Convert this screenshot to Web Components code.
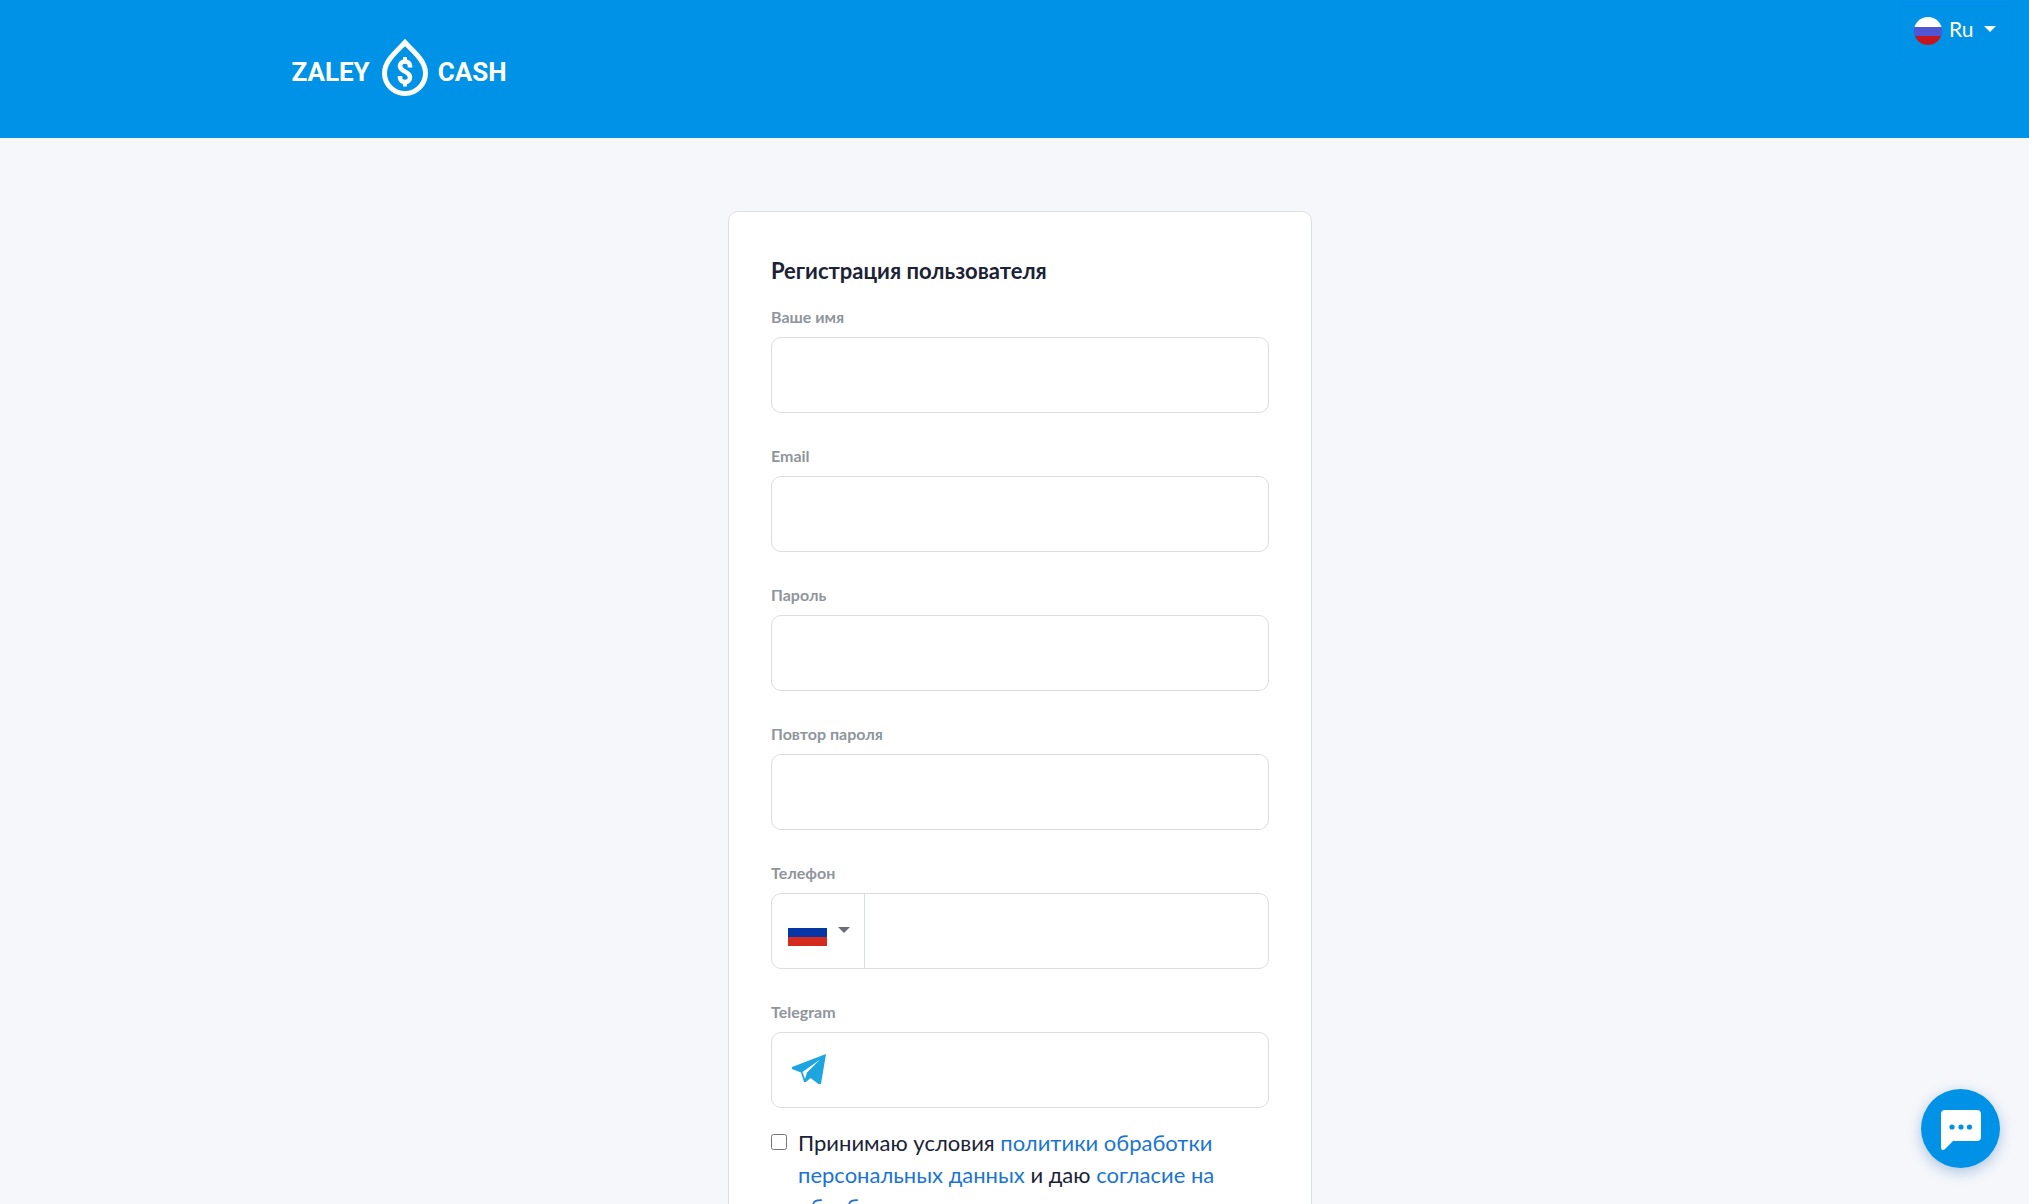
<!DOCTYPE html>
<html lang="ru">
<head>
<meta charset="UTF-8">
<meta name="viewport" content="width=device-width, initial-scale=1.0">
<title>Zaley Cash</title>
<style>
    html {
        scrollbar-width: none;
    }

    body {
        margin: 0;
        min-height: 100vh;
        background: #f5f7fb;
        color: #1b2236;
        font-family: Lato, "Noto Sans", sans-serif;
        font-size: 20px;
    }
</style>
</head>
<body>
<site-header></site-header>
<register-card heading="Регистрация пользователя">
    <form-field label="Ваше имя" name="name"></form-field>
    <form-field label="Email" name="email" type="email"></form-field>
    <form-field label="Пароль" name="password" type="password"></form-field>
    <form-field label="Повтор пароля" name="password2" type="password"></form-field>
    <form-field label="Телефон" name="phone" type="tel">
        <country-picker slot="before"></country-picker>
    </form-field>
    <form-field label="Telegram" name="telegram">
        <telegram-icon slot="before"></telegram-icon>
    </form-field>
    <agree-check>Принимаю условия <a href="#policy">политики обработки персональных данных</a> и даю <a href="#consent">согласие на обработку персональных данных</a></agree-check>
</register-card>
<chat-button></chat-button>

<script>
// Logo Component
class SiteLogo extends HTMLElement {
    constructor() {
        super();
        this.attachShadow({ mode: 'open' });
    }

    connectedCallback() {
        this.shadowRoot.innerHTML = `
            <style>
                :host {
                    display: block;
                }

                a {
                    display: flex;
                    align-items: center;
                    gap: 10px;
                    color: white;
                    font: bold 26px/52px Roboto, sans-serif;
                    text-decoration: none;
                }

                span {
                    padding-top: 8px;
                }

                svg {
                    display: block;
                }
            </style>

            <a href="#home">
                <span>ZALEY</span>
                <svg width="48" height="60" viewBox="-1 0 48 60" fill="none" stroke="white" aria-hidden="true">
                    <path d="M24 4.500C18 11.500 3.500 22 3.500 35a20.500 20.500 0 0 0 41 0C44.500 22 30 11.500 24 4.500Z" stroke-width="5"/>
                    <path d="M29 29.500v-1.500a5 4.500 0 0 0-10 0c0 6.500 10 4.500 10 11.500a5 4.500 0 0 1-10 0v-1.500" stroke-width="4.600"/>
                    <path d="M24 19v5M24 43.500v5" stroke-width="4"/>
                </svg>
                <span>CASH</span>
            </a>
        `;
    }
}

// Language Select Component
class LangSelect extends HTMLElement {
    constructor() {
        super();
        this.attachShadow({ mode: 'open' });
    }

    connectedCallback() {
        this.shadowRoot.innerHTML = `
            <style>
                :host {
                    display: block;
                }

                label {
                    display: flex;
                    align-items: center;
                    gap: 7px;
                    height: 50px;
                    padding: 0 15px 0 14px;
                    border: 1px solid #008ded;
                    border-radius: 4px;
                }

                .flag {
                    display: block;
                    border-radius: 50%;
                }

                .box {
                    display: flex;
                    align-items: center;
                    gap: 10px;
                    padding-bottom: 5px;
                }

                select {
                    appearance: none;
                    border: 0;
                    padding: 0;
                    background: none;
                    color: white;
                    font: 21px/28px Lato, "Noto Sans", sans-serif;
                    cursor: pointer;
                }

                option {
                    color: #1b2236;
                }
            </style>

            <label>
                <svg class="flag" width="28" height="28" viewBox="0 0 28 28" aria-hidden="true">
                    <path fill="#fff" d="M0 0h28v10H0z"/>
                    <path fill="#4f55d3" d="M0 10h28v9H0z"/>
                    <path fill="#c5161d" d="M0 19h28v9H0z"/>
                </svg>
                <span class="box">
                    <select aria-label="Язык"><option>Ru</option></select>
                    <svg width="12" height="6" viewBox="0 0 12 6" fill="#fff" aria-hidden="true"><path d="M0 0h12L6 6z"/></svg>
                </span>
            </label>
        `;
    }
}

// Header Component
class SiteHeader extends HTMLElement {
    constructor() {
        super();
        this.attachShadow({ mode: 'open' });
    }

    connectedCallback() {
        this.shadowRoot.innerHTML = `
            <style>
                :host {
                    display: block;
                    background: #0092e7;
                }

                header {
                    display: flex;
                    justify-content: space-between;
                    align-items: flex-start;
                    min-height: 138px;
                    box-sizing: border-box;
                    padding: 5px 17px 0 calc(50% - 723px);
                }

                site-logo {
                    margin-top: 33px;
                }
            </style>

            <header>
                <site-logo></site-logo>
                <lang-select></lang-select>
            </header>
        `;
    }
}

// Card Component
class RegisterCard extends HTMLElement {
    constructor() {
        super();
        this.attachShadow({ mode: 'open' });
    }

    connectedCallback() {
        this.shadowRoot.innerHTML = `
            <style>
                :host {
                    display: block;
                    padding: 73px 0 73px 11px;
                }

                form {
                    box-sizing: border-box;
                    max-width: 584px;
                    margin: 0 auto;
                    padding: 43px 42px;
                    background: white;
                    border: 1px solid #dcdfe6;
                    border-radius: 10px;
                }

                h1 {
                    margin: 0 0 19px;
                    font-size: 22px;
                    line-height: 32px;
                    font-weight: bold;
                }
            </style>

            <form>
                <h1>${this.getAttribute('heading')}</h1>
                <slot></slot>
            </form>
        `;
    }
}

// Form Field Component
class FormField extends HTMLElement {
    constructor() {
        super();
        this.attachShadow({ mode: 'open' });
    }

    connectedCallback() {
        const name = this.getAttribute('name');

        this.shadowRoot.innerHTML = `
            <style>
                :host {
                    display: block;
                    margin-bottom: 32px;
                }

                :host(:last-of-type) {
                    margin-bottom: 19px;
                }

                label {
                    display: block;
                    margin-bottom: 9px;
                    color: #8f959b;
                    font-size: 16px;
                    line-height: 22px;
                    font-weight: bold;
                }

                .control {
                    display: flex;
                    box-sizing: border-box;
                    height: 76px;
                    border: 1px solid #dcdde0;
                    border-radius: 10px;
                    overflow: hidden;
                }

                input {
                    flex: 1;
                    min-width: 0;
                    padding: 0 20px;
                    border: 0;
                    outline: 0;
                    background: none;
                    color: inherit;
                    font: inherit;
                }
            </style>

            <label for="${name}">${this.getAttribute('label')}</label>
            <div class="control">
                <slot name="before"></slot>
                <input id="${name}" name="${name}" type="${this.getAttribute('type') || 'text'}">
            </div>
        `;
    }
}

// Country Picker Component
class CountryPicker extends HTMLElement {
    constructor() {
        super();
        this.attachShadow({ mode: 'open' });
    }

    connectedCallback() {
        this.shadowRoot.innerHTML = `
            <style>
                :host {
                    display: flex;
                }

                button {
                    display: flex;
                    align-items: center;
                    gap: 11px;
                    padding: 0 14px 2px 16px;
                    border: 0;
                    border-right: 1px solid #dcdde0;
                    background: none;
                    cursor: pointer;
                }

                .flag {
                    margin-top: 4px;
                }
            </style>

            <button type="button" aria-label="Код страны" aria-haspopup="listbox">
                <svg class="flag" width="39" height="27" viewBox="0 0 39 27" aria-hidden="true">
                    <path fill="#fff" d="M0 0h39v9H0z"/>
                    <path fill="#0437a5" d="M0 9h39v9H0z"/>
                    <path fill="#d52b1e" d="M0 18h39v9H0z"/>
                </svg>
                <svg width="12" height="6" viewBox="0 0 12 6" fill="#6b6f76" aria-hidden="true"><path d="M0 0h12L6 6z"/></svg>
            </button>
        `;
    }
}

// Telegram Icon Component
class TelegramIcon extends HTMLElement {
    constructor() {
        super();
        this.attachShadow({ mode: 'open' });
    }

    connectedCallback() {
        this.shadowRoot.innerHTML = `
            <style>
                :host {
                    display: flex;
                    align-items: center;
                    padding: 0 0 2px 20px;
                }
            </style>

            <svg width="34" height="30" viewBox="0 0 34 30" aria-hidden="true">
                <path fill="#1ca5df" d="M34 0 0 13v2l9 3.500L12 28h2l4.500-4 8 6h2.500Z"/>
                <path fill="#fff" d="M10.500 18 28 5.500 15 18.500 13 25Z"/>
            </svg>
        `;
    }
}

// Agreement Checkbox Component
class AgreeCheck extends HTMLElement {
    constructor() {
        super();
        this.attachShadow({ mode: 'open' });
    }

    connectedCallback() {
        this.shadowRoot.innerHTML = `
            <style>
                :host {
                    display: flex;
                    align-items: flex-start;
                    gap: 11px;
                }

                input {
                    flex: none;
                    width: 16px;
                    height: 16px;
                    margin: 7px 0 0;
                }

                label {
                    font-size: 22px;
                    line-height: 32px;
                }

                ::slotted(a) {
                    color: #1a75d2;
                    text-decoration: none;
                }
            </style>

            <input type="checkbox" id="agree">
            <label for="agree"><slot></slot></label>
        `;
    }
}

// Chat Button Component
class ChatButton extends HTMLElement {
    constructor() {
        super();
        this.attachShadow({ mode: 'open' });
    }

    connectedCallback() {
        this.shadowRoot.innerHTML = `
            <style>
                :host {
                    display: block;
                    position: fixed;
                    right: 29px;
                    bottom: 36px;
                }

                button {
                    display: flex;
                    align-items: center;
                    justify-content: center;
                    width: 79px;
                    height: 79px;
                    padding: 3px 0 0;
                    border: 0;
                    border-radius: 50%;
                    background: #0092e7;
                    box-shadow: 0 4px 14px rgba(0, 80, 160, 0.3);
                    cursor: pointer;
                }
            </style>

            <button type="button" aria-label="Чат">
                <svg width="40" height="40" viewBox="0 0 40 40" aria-hidden="true">
                    <path fill="#fff" d="M4 0h32a4 4 0 0 1 4 4v23a4 4 0 0 1-4 4H12l-8.500 8.500Q0 41 0 37V4a4 4 0 0 1 4-4Z"/>
                    <g fill="#0092e7">
                        <circle cx="11" cy="17" r="2.600"/>
                        <circle cx="20" cy="17" r="2.600"/>
                        <circle cx="28.500" cy="17" r="2.600"/>
                    </g>
                </svg>
            </button>
        `;
    }
}

// Register the custom elements
customElements.define('site-logo', SiteLogo);
customElements.define('lang-select', LangSelect);
customElements.define('site-header', SiteHeader);
customElements.define('register-card', RegisterCard);
customElements.define('form-field', FormField);
customElements.define('country-picker', CountryPicker);
customElements.define('telegram-icon', TelegramIcon);
customElements.define('agree-check', AgreeCheck);
customElements.define('chat-button', ChatButton);
</script>
</body>
</html>
